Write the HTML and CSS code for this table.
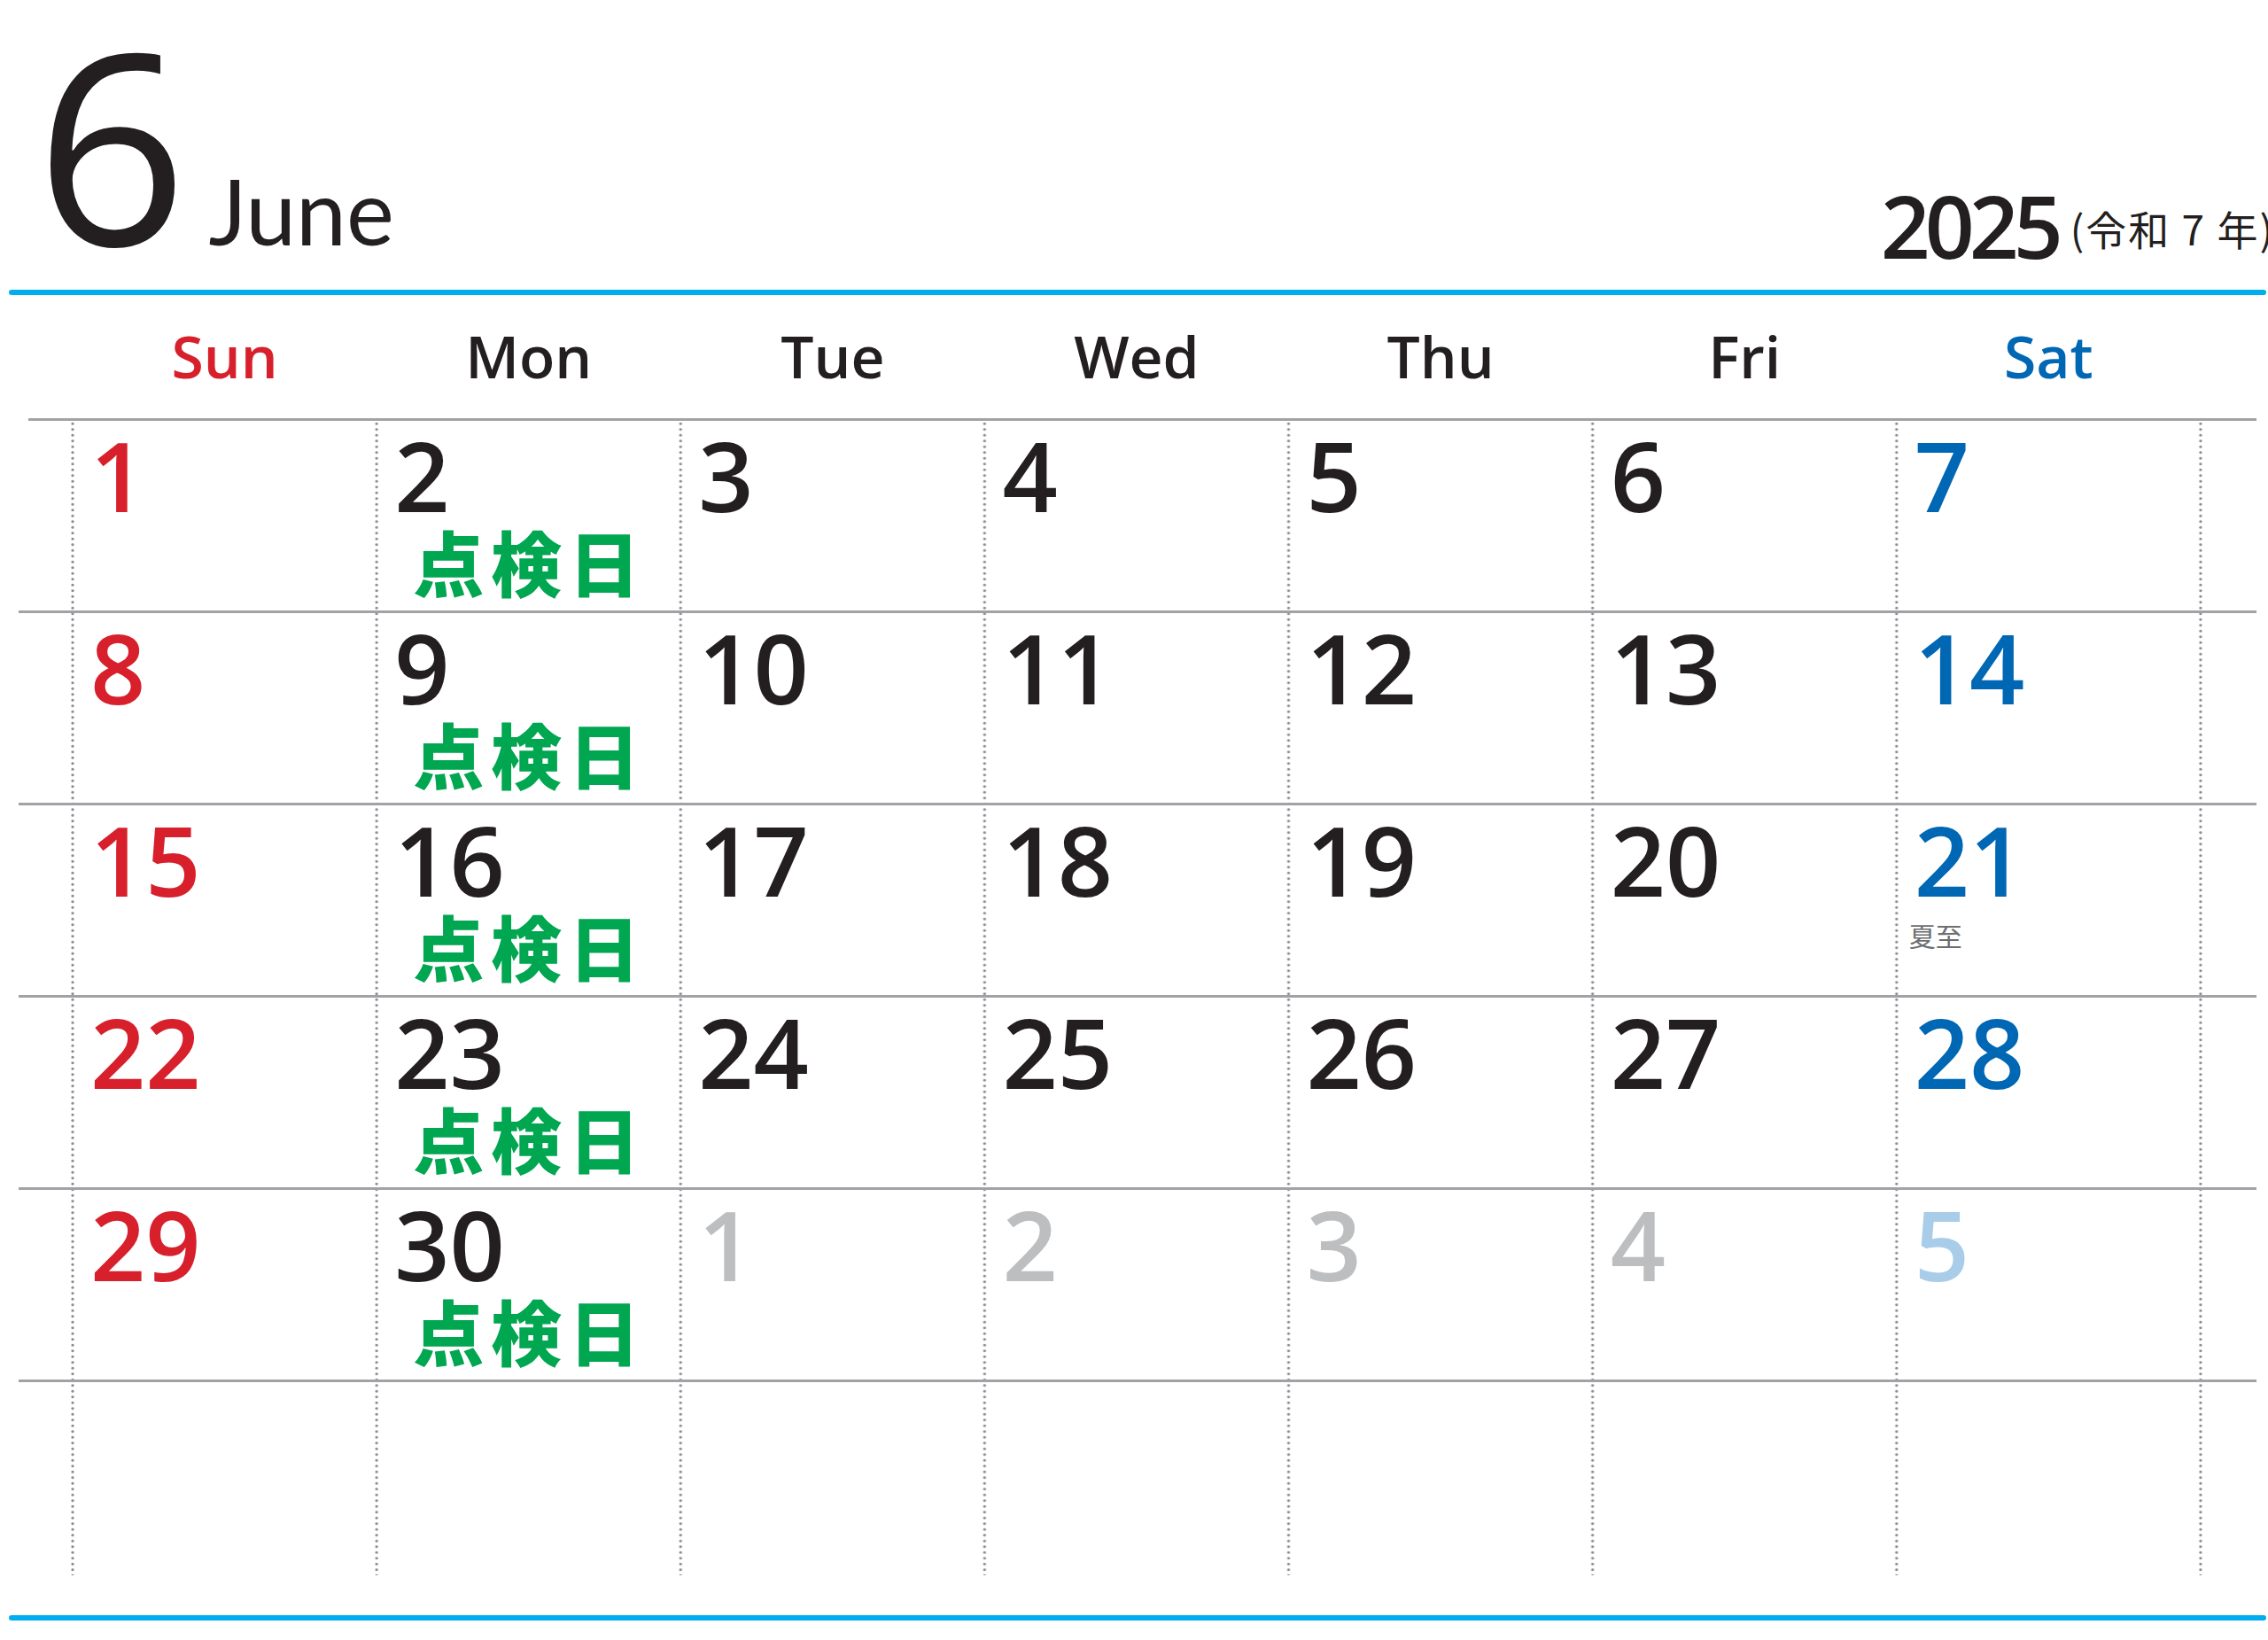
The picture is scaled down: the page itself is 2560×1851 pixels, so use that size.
FILE: index.html
```html
<!DOCTYPE html>
<html lang="ja">
<head>
<meta charset="utf-8">
<title>June 2025</title>
<link rel="stylesheet" href="styles.css">
</head>
<body>
<div class="calendar">
  <header class="head">
    <div class="month"><span class="month-num">6</span><span class="month-name">June</span></div>
    <div class="year"><span class="year-num">2025</span><span class="era">(令和 7 年)</span></div>
  </header>
  <div class="rule"></div>
  <div class="weekdays">
    <div class="wd sun">Sun</div>
    <div class="wd">Mon</div>
    <div class="wd">Tue</div>
    <div class="wd">Wed</div>
    <div class="wd">Thu</div>
    <div class="wd">Fri</div>
    <div class="wd sat">Sat</div>
  </div>
  <div class="weeks">
    <div class="week">
      <div class="day sun"><span class="num">1</span></div>
      <div class="day"><span class="num">2</span><span class="note">点検日</span></div>
      <div class="day"><span class="num">3</span></div>
      <div class="day"><span class="num">4</span></div>
      <div class="day"><span class="num">5</span></div>
      <div class="day"><span class="num">6</span></div>
      <div class="day sat"><span class="num">7</span></div>
    </div>
    <div class="week">
      <div class="day sun"><span class="num">8</span></div>
      <div class="day"><span class="num">9</span><span class="note">点検日</span></div>
      <div class="day"><span class="num">10</span></div>
      <div class="day"><span class="num">11</span></div>
      <div class="day"><span class="num">12</span></div>
      <div class="day"><span class="num">13</span></div>
      <div class="day sat"><span class="num">14</span></div>
    </div>
    <div class="week">
      <div class="day sun"><span class="num">15</span></div>
      <div class="day"><span class="num">16</span><span class="note">点検日</span></div>
      <div class="day"><span class="num">17</span></div>
      <div class="day"><span class="num">18</span></div>
      <div class="day"><span class="num">19</span></div>
      <div class="day"><span class="num">20</span></div>
      <div class="day sat"><span class="num">21</span><span class="holiday">夏至</span></div>
    </div>
    <div class="week">
      <div class="day sun"><span class="num">22</span></div>
      <div class="day"><span class="num">23</span><span class="note">点検日</span></div>
      <div class="day"><span class="num">24</span></div>
      <div class="day"><span class="num">25</span></div>
      <div class="day"><span class="num">26</span></div>
      <div class="day"><span class="num">27</span></div>
      <div class="day sat"><span class="num">28</span></div>
    </div>
    <div class="week">
      <div class="day sun"><span class="num">29</span></div>
      <div class="day"><span class="num">30</span><span class="note">点検日</span></div>
      <div class="day next"><span class="num">1</span></div>
      <div class="day next"><span class="num">2</span></div>
      <div class="day next"><span class="num">3</span></div>
      <div class="day next"><span class="num">4</span></div>
      <div class="day next sat"><span class="num">5</span></div>
    </div>
    <div class="week last">
      <div class="day"></div>
      <div class="day"></div>
      <div class="day"></div>
      <div class="day"></div>
      <div class="day"></div>
      <div class="day"></div>
      <div class="day"></div>
    </div>
  </div>
  <div class="rule bottom"></div>
</div>
</body>
</html>
```

FILE: styles.css
```css
html, body {
  margin: 0;
  padding: 0;
  background: #ffffff;
  overflow: hidden;
}

.calendar {
  width: 2560px;
  height: 1851px;
  overflow: hidden;
  color: #231f20;
  font-family: "Open Sans", "Noto Sans", sans-serif;
}

/* ---------- header ---------- */
.head {
  height: 327px;
  display: flex;
  justify-content: space-between;
  align-items: flex-start;
  padding: 0 0 0 40px;
  box-sizing: border-box;
}

.month {
  display: flex;
  align-items: baseline;
  padding-top: 11px;
}

.month-num {
  font-size: 300px;
  line-height: 1;
  font-weight: 400;
}

.month-name {
  font-family: "Lato", "Open Sans", sans-serif;
  font-size: 102px;
  line-height: 1;
  font-weight: 400;
  margin-left: 24px;
}

.year {
  padding-top: 205px;
  margin-right: -8px;
  font-size: 98px;
  line-height: 1;
  font-weight: 600;
  white-space: nowrap;
}

.year-num {
  letter-spacing: -6px;
}

.era {
  font-family: "Noto Sans CJK JP", "Noto Sans", sans-serif;
  font-size: 46px;
  line-height: 1;
  font-weight: 400;
  letter-spacing: 2px;
  vertical-align: 15px;
  margin-left: 14px;
}

.rule {
  margin-left: 10px;
  width: 2548px;
  height: 6px;
  border-radius: 3px;
  background: #00aeef;
}

.rule.bottom {
  margin-top: 45px;
}

/* ---------- weekday labels ---------- */
.weekdays {
  margin-left: 32px;
  width: 2515px;
  padding: 35px 0 38px 50px;
  box-sizing: border-box;
  display: grid;
  grid-template-columns: repeat(7, 343.14px);
  border-bottom: 3px solid #a0a2a5;
}

.wd {
  font-size: 66px;
  line-height: 1;
  font-weight: 600;
  text-align: center;
}

/* ---------- weeks ---------- */
.weeks {
  margin-left: 21px;
  width: 2526px;
  background-image: radial-gradient(circle at center, #8a8c8f 0, #8a8c8f 1.3px, rgba(138, 140, 143, 0) 1.9px);
  background-size: 343.14px 6.5px;
  background-position: -110.57px 0;
}

.week {
  height: 217px;
  box-sizing: border-box;
  border-top: 3px solid #a0a2a5;
  padding-left: 61px;
  display: grid;
  grid-template-columns: repeat(7, 343.14px);
}

.week:first-child {
  height: 214px;
  border-top: 0;
}

.week.last {
  height: 221px;
}

.day {
  padding: 6px 0 0 20px;
  display: flex;
  flex-direction: column;
  align-items: flex-start;
}

.num {
  font-size: 109px;
  line-height: 1;
  font-weight: 600;
}

.note {
  font-family: "Noto Sans CJK JP", sans-serif;
  font-size: 80px;
  line-height: 1;
  font-weight: 900;
  letter-spacing: 8px;
  color: #00a650;
  margin: 2px 0 0 21px;
}

.holiday {
  font-family: "Noto Sans CJK JP", sans-serif;
  font-size: 30px;
  line-height: 1;
  font-weight: 400;
  color: #6d6e71;
  margin: 16px 0 0 -6px;
}

/* ---------- colours ---------- */
.sun { color: #d7202b; }
.sat { color: #0067b4; }
.day.next { color: #bcbec0; }
.day.next.sat { color: #a9cde9; }
```
